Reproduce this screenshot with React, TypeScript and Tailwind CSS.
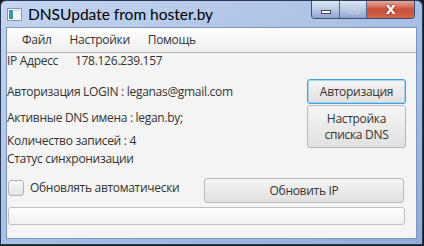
import React from 'react';

const font = { fontFamily: '"Open Sans", "Noto Sans", sans-serif' };

function AppIcon() {
  return (
    <svg width="15" height="13" viewBox="0 0 15 13">
      <rect x="0.5" y="0.5" width="14" height="12" fill="#f4f6f8" stroke="#8a97a8" />
      <rect x="2" y="2" width="4" height="9" fill="#3a9a8a" />
      <rect x="2" y="2" width="4" height="4" fill="#4a8ad0" />
      <rect x="7" y="2" width="6" height="1" fill="#c8d0da" />
    </svg>
  );
}

function WindowControls() {
  return (
    <div className="flex h-[18px] mr-[7px] rounded-b-[4px] border border-t-0 border-[#3e4e6c] overflow-hidden">
      <div className="w-[28px] flex items-center justify-center bg-gradient-to-b from-[#dce6f4] via-[#b9c9e4] to-[#8fa6d0] border-r border-[#56688a]">
        <div className="w-[10px] h-[4px] mt-[5px] bg-white border border-[#404a5c]" />
      </div>
      <div className="w-[27px] flex items-center justify-center bg-gradient-to-b from-[#dce6f4] via-[#b9c9e4] to-[#8fa6d0] border-r border-[#56688a]">
        <div className="w-[11px] h-[9px] border border-[#c8d2e2] flex items-center justify-center">
          <div className="w-[5px] h-[3px] border border-[#c8d2e2]" />
        </div>
      </div>
      <div className="w-[47px] flex items-center justify-center bg-gradient-to-b from-[#e8a89a] via-[#c9503c] to-[#d2664a]">
        <span className="text-white text-[13px] font-bold leading-none" style={{ fontFamily: '"DejaVu Sans", sans-serif', textShadow: '0 0 2px #5a1a10' }}>
          X
        </span>
      </div>
    </div>
  );
}

function FxButton({ children, focused, className = '' }: { children: React.ReactNode; focused?: boolean; className?: string }) {
  return (
    <div
      className={`flex items-center justify-center text-center rounded-[3px] bg-gradient-to-b from-[#f6f6f6] to-[#e0e0e0] text-[#333] text-[12px] leading-[16px] ${
        focused ? 'border border-[#3aa0e4] shadow-[inset_0_0_0_1px_#a8d4f2]' : 'border border-[#b8b8b8]'
      } ${className}`}
    >
      {children}
    </div>
  );
}

export default function App() {
  return (
    <div className="w-[424px] h-[246px] bg-[#1a1a1a] overflow-hidden tracking-[-0.3px]" style={font}>
      <div className="w-[423px] h-[245px] flex flex-col rounded-t-[6px] border border-[#2a3a5a] bg-gradient-to-br from-[#c3d5ef] via-[#a9c0e6] to-[#93acd8]">
        {/* Title bar */}
        <div className="h-[26px] flex items-start shrink-0">
          <div className="mt-[7px] ml-[6px]">
            <AppIcon />
          </div>
          <div className="ml-[6px] mt-[3px] text-[15.5px] leading-[20px] text-black tracking-normal" style={{ fontFamily: 'Lato, sans-serif' }}>
            DNSUpdate from hoster.by
          </div>
          <div className="flex-1" />
          <WindowControls />
        </div>

        {/* Client area */}
        <div className="mx-[5px] h-[212px] flex flex-col bg-[#f4f4f4] border border-[#7f93b8]">
          {/* Menu bar */}
          <div className="h-[25px] shrink-0 flex items-center gap-[18px] pl-[15px] bg-gradient-to-b from-white to-[#eeeeee] border-b border-[#b4b4b4] text-[12px] text-[#333]">
            <span>Файл</span>
            <span>Настройки</span>
            <span>Помощь</span>
          </div>

          {/* Body */}
          <div className="flex flex-col text-[12px] text-[#333] leading-[16px]">
            <div className="h-[124px] flex">
              <div className="flex-1 flex flex-col">
                <div className="flex">
                  <span className="w-[68px]">IP Адресс</span>
                  <span>178.126.239.157</span>
                </div>
                <div className="mt-[15px]">Авторизация LOGIN : leganas@gmail.com</div>
                <div className="mt-[10px]">Активные DNS имена : legan.by;</div>
                <div className="mt-[7px]">Количество записей : 4</div>
                <div className="mt-[2px]">Статус синхронизации</div>
              </div>
              <div className="w-[99px] mr-[10px] mt-[26px] flex flex-col gap-[1px]">
                <FxButton focused className="h-[25px]">Авторизация</FxButton>
                <FxButton className="h-[43px]">
                  Настройка
                  <br />
                  списка DNS
                </FxButton>
              </div>
            </div>

            <div className="flex items-start mt-[1px]">
              <div className="w-[16px] h-[16px] mt-[2px] ml-[1px] rounded-[3px] border border-[#b4b4b4] bg-gradient-to-b from-[#f8f8f8] to-[#e2e2e2]" />
              <span className="ml-[6px] mt-[2px]">Обновлять автоматически</span>
              <div className="flex-1" />
              <FxButton className="w-[200px] h-[25px] mr-[12px]">Обновить IP</FxButton>
            </div>

            <div className="mt-[4px] ml-[1px] mr-[11px] h-[18px] rounded-[3px] border border-[#c0c0c0] bg-gradient-to-b from-[#ffffff] to-[#f0f0f0]" />
          </div>
        </div>
      </div>
    </div>
  );
}
